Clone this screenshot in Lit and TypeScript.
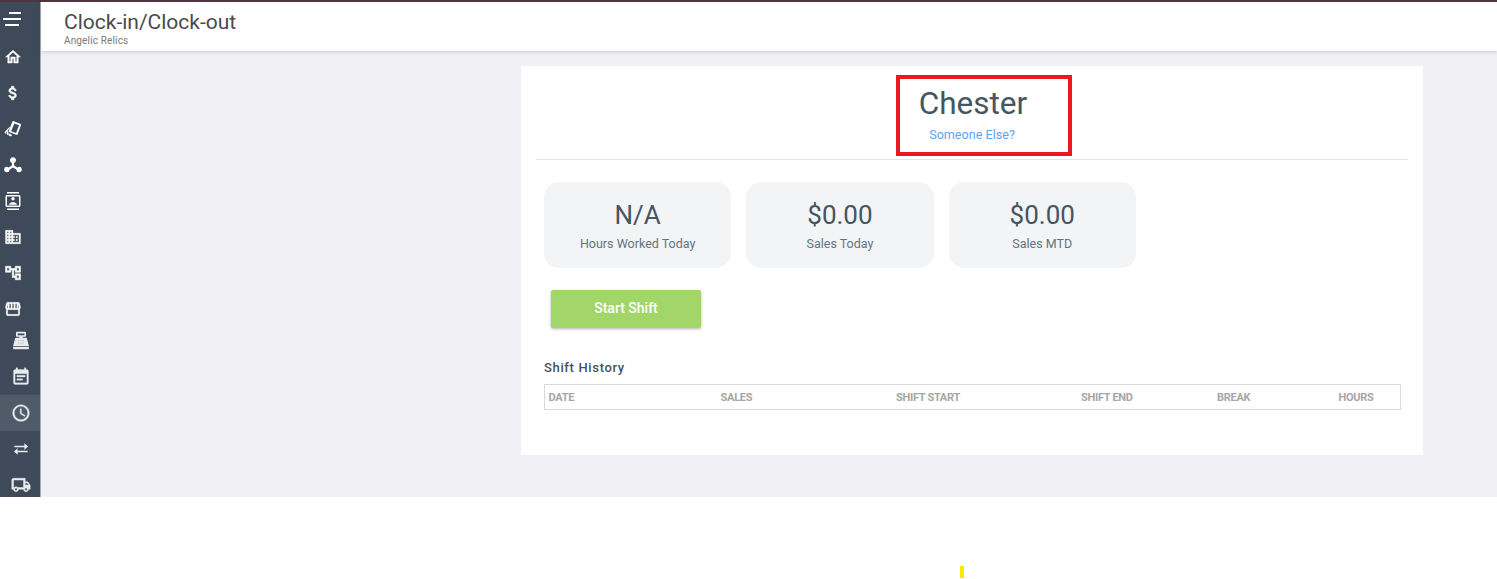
import { LitElement, html, css, svg } from "lit";
import { customElement } from "lit/decorators.js";

const icons: Record<string, unknown> = {
  home: svg`<path stroke="currentColor" stroke-width=".6" d="M12 5.690l5 4.500V18h-2v-6H9v6H7v-7.810l5-4.500M12 3L2 12h3v8h6v-6h2v6h6v-8h3L12 3z"/>`,
  dollar: svg`<path stroke="currentColor" stroke-width=".8" d="M11.800 10.900c-2.270-.59-3-1.200-3-2.150 0-1.090 1.010-1.850 2.700-1.850 1.780 0 2.440.85 2.500 2.100h2.210c-.07-1.720-1.120-3.300-3.210-3.810V3h-3v2.160c-1.940.42-3.500 1.680-3.500 3.610 0 2.310 1.910 3.460 4.700 4.130 2.500.6 3 1.480 3 2.410 0 .69-.49 1.790-2.700 1.790-2.060 0-2.870-.92-2.980-2.100h-2.200c.12 2.190 1.760 3.420 3.680 3.830V21h3v-2.150c1.950-.37 3.500-1.500 3.500-3.550 0-2.840-2.430-3.810-4.700-4.400z"/>`,
  cards: svg`<path fill-rule="evenodd" d="M13 1.500l8.800 3.400c.8.3 1.200 1.200.9 2l-4.500 12c-.3.8-1.200 1.200-2 .9L7.400 16.400c-.8-.3-1.200-1.200-.9-2L11 2.400c.3-.8 1.200-1.200 2-.9zm.8 3L9.500 14.900l6.600 2.500 4-10.400-6.300-2.500z"/><path d="M7.800 8.500L1.100 15.600c-.5.6-.4 1.400.2 1.900l1.900 1.500-.3-2.700 4.300-4.700zM5.500 13.800L3.800 16l.3 3.600 1.900.4zM6.300 17.800V20.600l1.900.9c.6.3 1.200.2 1.700-.3l1-1.300z"/>`,
  hub: svg`<path d="M12 1.500a4 4 0 0 1 1.500 7.700v3.300l4.200 2.700 1.800-.7a3.600 3.600 0 1 1-2.900 3.700l-4.600-3-4.600 3A3.600 3.600 0 1 1 4.500 14.500l1.800.7 4.200-2.700V9.200A4 4 0 0 1 12 1.500z"/>`,
  contacts: svg`<path d="M20 0H4v2h16V0zM4 24h16v-2H4v2zM20 4H4c-1.100 0-2 .9-2 2v12c0 1.100.9 2 2 2h16c1.100 0 2-.9 2-2V6c0-1.100-.9-2-2-2zm0 14H4V6h16v12zm-8-6.750c1.240 0 2.250-1.010 2.250-2.250S13.240 6.750 12 6.750 9.750 7.760 9.750 9s1.010 2.250 2.250 2.250zM17 16.250c0-1.670-3.330-2.500-5-2.500s-5 .83-5 2.500V17h10v-.75z"/>`,
  domain: svg`<path stroke="currentColor" stroke-width=".4" d="M12 7V3H2v18h20V7H12zM6 19H4v-2h2v2zm0-4H4v-2h2v2zm0-4H4V9h2v2zm0-4H4V5h2v2zm4 12H8v-2h2v2zm0-4H8v-2h2v2zm0-4H8V9h2v2zm0-4H8V5h2v2zm10 12h-8v-2h2v-2h-2v-2h2v-2h-2V9h8v10zm-2-8h-2v2h2v-2zm0 4h-2v2h2v-2z"/>`,
  tree: svg`<path stroke="currentColor" stroke-width=".7" d="M22 11V3h-7v3H9V3H2v8h7V8h2v10h4v3h7v-8h-7v3h-2V8h2v3h7zM7 9H4V5h3v4zm10 6h3v4h-3v-4zm0-10h3v4h-3V5z"/>`,
  store: svg`<path stroke="currentColor" stroke-width=".3" fill-rule="evenodd" d="M5 3h14c.9 0 1.700.6 1.900 1.500L22 9c.3 1.300-.1 2.400-1 3.100V19c0 1.100-.9 2-2 2H5c-1.100 0-2-.9-2-2v-6.900c-.9-.7-1.300-1.800-1-3.100l1.100-4.500C3.300 3.600 4.100 3 5 3zm0 10v6h14v-6H5zm.1-8L4 9.500c-.1.800.4 1.500 1.100 1.500V5zm2 0v6h2V5zm4 0v6h2V5zm4 0v6h2V5zm3.800 0v6c.7 0 1.200-.7 1.100-1.500L18.900 5z"/>`,
  register: svg`<path fill-rule="evenodd" d="M7 1h10c.6 0 1 .4 1 1v4c0 .6-.4 1-1 1h-3v1h4c.5 0 .9.300 1 .8L21.500 18h-19L5 8.800c.1-.5.500-.8 1-.8h4V7H7c-.6 0-1-.4-1-1V2c0-.6.400-1 1-1zm1 2v2h8V3H8zM9 11v.7h.8V11zm2.600 0v.7h.8V11zm2.600 0v.7h.8V11zM9 14v.7h.8V14zm2.600 0v.7h.8V14zm2.600 0v.7h.8V14zM2.500 19h19v2c0 .6-.4 1-1 1h-17c-.6 0-1-.4-1-1z"/>`,
  event: svg`<path stroke="currentColor" stroke-width=".3" d="M17 10H7v2h10v-2zm2-7h-1V1h-2v2H8V1H6v2H5c-1.110 0-1.990.9-1.990 2L3 19c0 1.100.89 2 2 2h14c1.100 0 2-.9 2-2V5c0-1.100-.9-2-2-2zm0 16H5V8h14v11zm-5-5H7v2h7v-2z"/>`,
  clock: svg`<path stroke="currentColor" stroke-width=".4" d="M11.990 2C6.470 2 2 6.480 2 12s4.470 10 9.990 10C17.520 22 22 17.520 22 12S17.520 2 11.990 2zM12 20c-4.420 0-8-3.580-8-8s3.580-8 8-8 8 3.580 8 8-3.580 8-8 8zm.5-13H11v6l5.250 3.150.75-1.230-4.500-2.670z"/>`,
  swap: svg`<path d="M16 5l4.500 4-4.500 4v-3H4V8h12zM8 11v3h12v2H8v3l-4.500-4z"/>`,
  truck: svg`<path stroke="currentColor" stroke-width=".6" d="M20 8h-3V4H3c-1.100 0-2 .9-2 2v11h2c0 1.660 1.340 3 3 3s3-1.340 3-3h6c0 1.660 1.340 3 3 3s3-1.340 3-3h2v-5l-3-4zM6 18.500c-.83 0-1.500-.67-1.500-1.500s.67-1.500 1.500-1.500 1.500.67 1.500 1.500-.67 1.500-1.500 1.500zM15 15H8.200c-.55-.6-1.340-1-2.200-1s-1.650.4-2.200 1H3V6h12v9zm4.500-5.500l1.960 2.500H17V9.500h2.500zm-1.500 9c-.83 0-1.500-.67-1.500-1.500s.67-1.500 1.500-1.500 1.500.67 1.500 1.500-.67 1.500-1.500 1.500z"/>`,
};

const upperItems = ["home", "dollar", "cards", "hub", "contacts", "domain", "tree", "store"];
const lowerItems = [
  { icon: "register", cls: "" },
  { icon: "event", cls: "" },
  { icon: "clock", cls: "active" },
  { icon: "swap", cls: "" },
  { icon: "truck", cls: "" },
];

const stats = [
  { value: "N/A", label: "Hours Worked Today" },
  { value: "$0.00", label: "Sales Today" },
  { value: "$0.00", label: "Sales MTD" },
];

const columns = ["DATE", "SALES", "SHIFT START", "SHIFT END", "BREAK", "HOURS"];

@customElement("app-root")
export class AppRoot extends LitElement {
  static styles = css`
    :host {
      display: block;
      position: relative;
      height: 579px;
      overflow: hidden;
      background: #fff;
      font-family: Roboto, "Liberation Sans", sans-serif;
    }
    .shell {
      height: 497px;
      display: flex;
      flex-direction: column;
      background: #f0f0f5;
      overflow: hidden;
    }
    .topline { height: 2px; flex: none; background: #4d3540; }
    .body { flex: 1; display: flex; min-height: 0; }
    .side {
      width: 40px;
      flex: none;
      background: #3e4a59;
      border-right: 1px solid #a5abb3;
      overflow: hidden;
    }
    .burger {
      height: 37px;
      box-sizing: border-box;
      padding: 10px 0 0 3px;
      display: flex;
      flex-direction: column;
      gap: 4px;
      align-items: flex-end;
      width: 21px;
    }
    .burger i { display: block; height: 2px; background: #fff; }
    .burger i:nth-child(1) { width: 12px; }
    .burger i:nth-child(2) { width: 18px; }
    .burger i:nth-child(3) { width: 14px; margin-right: 2px; }
    .item {
      height: 36px;
      display: flex;
      align-items: center;
      color: #fff;
    }
    .upper .item { padding-left: 4px; }
    .upper svg { width: 18px; height: 18px; fill: currentColor; display: block; }
    .lower { margin-top: -4px; }
    .lower .item { padding-left: 11px; color: #e8eaed; }
    .lower svg { width: 20px; height: 20px; fill: currentColor; display: block; }
    .item.active { background: #505b69; }
    .content { flex: 1; min-width: 0; display: flex; flex-direction: column; }
    .head {
      height: 49px;
      flex: none;
      box-sizing: border-box;
      background: #fff;
      box-shadow: 0 1px 4px rgba(60, 70, 90, 0.2);
      padding: 8px 0 0 23px;
    }
    .head h1 {
      margin: 0;
      font-size: 21px;
      line-height: 24px;
      font-weight: 400;
      color: #4a4a4a;
    }
    .head p {
      margin: 1px 0 0;
      font-size: 10px;
      line-height: 11px;
      color: #7a7a7a;
      letter-spacing: 0.15px;
    }
    .main { flex: 1; padding: 15px 74px 0 480px; }
    .card { background: #fff; height: 389px; padding: 0 15px; box-sizing: border-box; }
    .who {
      height: 94px;
      box-sizing: border-box;
      border-bottom: 1px solid #e2e3e6;
      display: flex;
      flex-direction: column;
      align-items: center;
    }
    .who h2 {
      margin: 19px 0 0;
      font-size: 31.500px;
      line-height: 38px;
      font-weight: 400;
      color: #455561;
      transform: translateX(1px);
    }
    .who a {
      margin-top: 5px;
      font-size: 12.600px;
      line-height: 14px;
      color: #5da4f5;
      text-decoration: none;
    }
    .stats {
      display: flex;
      gap: 15px;
      padding: 22px 0 0 8px;
    }
    .stat {
      width: 187.300px;
      height: 86px;
      box-sizing: border-box;
      background: #f3f4f6;
      border-radius: 15px;
      text-align: center;
      padding-top: 16px;
    }
    .stat b {
      display: block;
      font-weight: 400;
      font-size: 26px;
      line-height: 34px;
      color: #455561;
    }
    .stat span {
      display: block;
      margin-top: 4px;
      font-size: 12.500px;
      line-height: 15px;
      color: #65737d;
    }
    .start {
      display: block;
      margin: 22px 0 0 15px;
      width: 150px;
      height: 38px;
      border: 0;
      border-radius: 2px;
      background: #a2d669;
      color: #fff;
      font: 500 14px Roboto, sans-serif;
      box-shadow: 0 1px 3px rgba(0, 0, 0, 0.3);
      padding: 0 0 2px;
    }
    h3 {
      margin: 32px 0 0 8px;
      font-size: 13px;
      line-height: 16px;
      font-weight: 500;
      letter-spacing: 0.65px;
      color: #45525e;
    }
    .table {
      margin: 8px 7px 0 8px;
      height: 26px;
      box-sizing: border-box;
      border: 1px solid #d9dadc;
      display: grid;
      grid-template-columns: 172px 175.500px 185px 136px 121.500px 1fr;
      align-items: center;
      padding-left: 3.600px;
    }
    .table span {
      font-size: 11px;
      font-weight: 700;
      color: #a6a6a6;
      letter-spacing: -0.3px;
    }
    .mark {
      position: absolute;
      left: 896px;
      top: 75px;
      width: 176px;
      height: 81px;
      box-sizing: border-box;
      border: 4px solid #e8191f;
    }
    .speck {
      position: absolute;
      left: 960px;
      top: 566px;
      width: 4px;
      height: 12px;
      background: #ffe800;
    }
  `;

  render() {
    return html`
      <div class="shell">
        <div class="topline"></div>
        <div class="body">
          <nav class="side">
            <div class="burger"><i></i><i></i><i></i></div>
            <div class="upper">
              ${upperItems.map(
                (n) => html`<div class="item"><svg viewBox="0 0 24 24">${icons[n]}</svg></div>`
              )}
            </div>
            <div class="lower">
              ${lowerItems.map(
                (n) => html`<div class="item ${n.cls}">
                  <svg viewBox="0 0 24 24">${icons[n.icon]}</svg>
                </div>`
              )}
            </div>
          </nav>
          <div class="content">
            <header class="head">
              <h1>Clock-in/Clock-out</h1>
              <p>Angelic Relics</p>
            </header>
            <main class="main">
              <section class="card">
                <div class="who">
                  <h2>Chester</h2>
                  <a href="#">Someone Else?</a>
                </div>
                <div class="stats">
                  ${stats.map(
                    (s) => html`<div class="stat"><b>${s.value}</b><span>${s.label}</span></div>`
                  )}
                </div>
                <button class="start">Start Shift</button>
                <h3>Shift History</h3>
                <div class="table">
                  ${columns.map((c) => html`<span>${c}</span>`)}
                </div>
              </section>
            </main>
          </div>
        </div>
      </div>
      <div class="mark"></div>
      <div class="speck"></div>
    `;
  }
}
